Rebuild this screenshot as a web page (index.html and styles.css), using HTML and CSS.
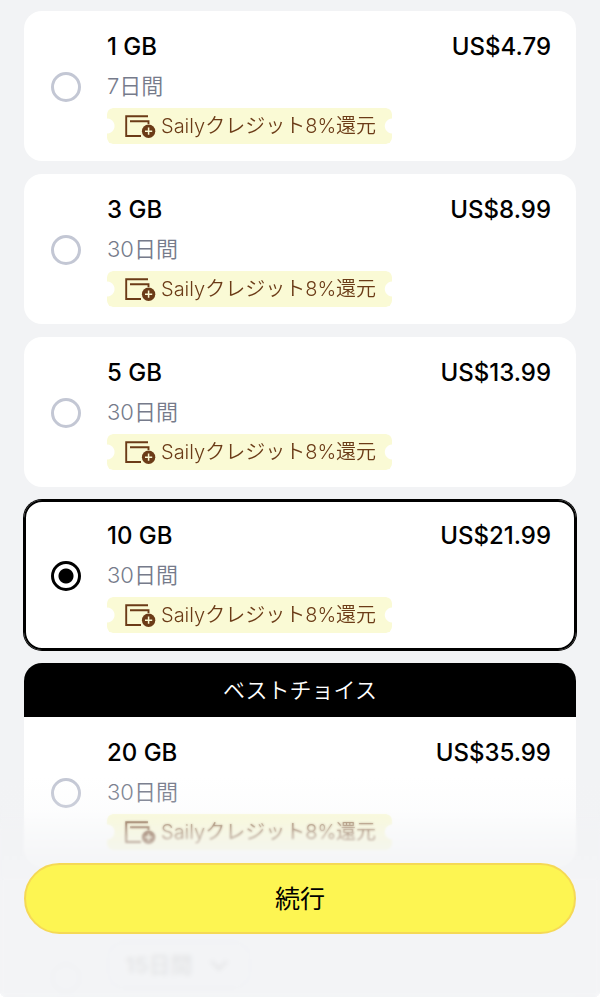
FILE: index.html
```
<!DOCTYPE html>
<html lang="ja">
<head>
  <meta charset="UTF-8" />
  <meta name="viewport" content="width=device-width, initial-scale=1.0" />
  <title>プランを選択</title>
  <link rel="stylesheet" href="styles.css">
</head>
<body>
  <svg class="sprite" aria-hidden="true">
    <symbol id="icon-credit" viewBox="0 0 31 23">
      <path d="M23 1.2H1.2V21H16" fill="none" stroke="currentColor" stroke-width="1.9"/>
      <path d="M5 6.2H23.5V9" fill="none" stroke="currentColor" stroke-width="1.9"/>
      <circle cx="23.6" cy="16.2" r="6.7" fill="currentColor"/>
      <path d="M23.6 12.6V19.8M20 16.2H27.2" stroke="#fafad5" stroke-width="1.5"/>
    </symbol>
  </svg>

  <form class="app">
    <main class="plan-list">
      <label class="plan">
        <input class="radio" type="radio" name="plan" value="1">
        <span class="details">
          <span class="title-row"><span>1 GB</span><span>US$4.79</span></span>
          <span class="days">7日間</span>
          <span class="credit"><svg class="credit-icon"><use href="#icon-credit"/></svg>Sailyクレジット8%還元</span>
        </span>
      </label>

      <label class="plan">
        <input class="radio" type="radio" name="plan" value="3">
        <span class="details">
          <span class="title-row"><span>3 GB</span><span>US$8.99</span></span>
          <span class="days">30日間</span>
          <span class="credit"><svg class="credit-icon"><use href="#icon-credit"/></svg>Sailyクレジット8%還元</span>
        </span>
      </label>

      <label class="plan">
        <input class="radio" type="radio" name="plan" value="5">
        <span class="details">
          <span class="title-row"><span>5 GB</span><span>US$13.99</span></span>
          <span class="days">30日間</span>
          <span class="credit"><svg class="credit-icon"><use href="#icon-credit"/></svg>Sailyクレジット8%還元</span>
        </span>
      </label>

      <label class="plan">
        <input class="radio" type="radio" name="plan" value="10" checked>
        <span class="details">
          <span class="title-row"><span>10 GB</span><span>US$21.99</span></span>
          <span class="days">30日間</span>
          <span class="credit"><svg class="credit-icon"><use href="#icon-credit"/></svg>Sailyクレジット8%還元</span>
        </span>
      </label>

      <section class="best">
        <h2 class="best-title">ベストチョイス</h2>
        <label class="plan">
          <input class="radio" type="radio" name="plan" value="20">
          <span class="details">
            <span class="title-row"><span>20 GB</span><span>US$35.99</span></span>
            <span class="days">30日間</span>
            <span class="credit"><svg class="credit-icon"><use href="#icon-credit"/></svg>Sailyクレジット8%還元</span>
          </span>
        </label>
      </section>

      <div class="plan plan-flex">
        <input class="radio" type="radio" name="plan" value="flex" aria-label="15日間">
        <div class="period">
          <select class="period-select" aria-label="期間">
            <option>15日間</option>
          </select>
          <svg class="chevron" viewBox="0 0 20 12"><path d="M2 2l8 8 8-8" fill="none" stroke="currentColor" stroke-width="3"/></svg>
        </div>
      </div>
    </main>

    <footer class="footer">
      <button class="continue" type="button">続行</button>
    </footer>
  </form>
</body>
</html>
```

FILE: styles.css
```
:root {
  --bg: #f2f3f5;
  --grey: #767b8b;
  --ring: #c3c7d4;
  --brown: #6b3b17;
  --yellow: #fdf552;
}

* {
  box-sizing: border-box;
}

body {
  margin: 0;
  background: #fff;
  color: #000;
  font-family: Inter, "Noto Sans CJK JP", sans-serif;
}

.sprite {
  position: absolute;
  width: 0;
  height: 0;
}

.app {
  position: relative;
  height: 100vh;
  overflow: hidden;
  background: var(--bg);
  border-radius: 0 0 6px 6px;
}

.plan-list {
  display: flex;
  flex-direction: column;
  gap: 13px;
  height: 100%;
  padding: 11px 24px 0;
  overflow-y: auto;
  scrollbar-width: none;
}

.plan {
  display: flex;
  flex-shrink: 0;
  align-items: center;
  gap: 26px;
  padding: 18px 25px 17px 27px;
  background: #fff;
  border-radius: 18px;
  cursor: pointer;
}

.plan:has(.radio:checked) {
  box-shadow: 0 0 0 1px #000, inset 0 0 0 2px #000;
}

.radio {
  appearance: none;
  flex-shrink: 0;
  width: 30px;
  height: 30px;
  margin: 0;
  border: 3px solid var(--ring);
  border-radius: 50%;
  background: #fff;
}

.radio:checked {
  border-color: #000;
  background: radial-gradient(circle, #000 7px, #fff 8px);
}

.details {
  display: flex;
  flex: 1;
  flex-direction: column;
  align-items: flex-start;
  gap: 4px;
}

.title-row {
  display: flex;
  justify-content: space-between;
  width: 100%;
  font-size: 24px;
  font-weight: 500;
  line-height: 36px;
}

.days {
  color: var(--grey);
  font-size: 22px;
  font-weight: 350;
  line-height: 35px;
}

/* ticket shape, one notch on each side */
.credit {
  display: flex;
  align-items: center;
  gap: 5px;
  height: 36px;
  padding: 0 16px 0 18px;
  border-radius: 6px;
  background: #fafad5;
  color: var(--brown);
  font-size: 20px;
  font-weight: 350;
  line-height: 36px;
  white-space: nowrap;
  mask:
    radial-gradient(circle at 0 50%, transparent 7px, #000 8px) left / 51% 100% no-repeat,
    radial-gradient(circle at 100% 50%, transparent 7px, #000 8px) right / 51% 100% no-repeat;
}

.credit-icon {
  width: 31px;
  height: 23px;
}

.best {
  flex-shrink: 0;
  border-radius: 18px;
  overflow: hidden;
}

.best-title {
  margin: 0;
  background: #000;
  color: #fff;
  font-size: 22px;
  font-weight: 350;
  line-height: 54px;
  text-align: center;
}

.best .plan {
  border-radius: 0 0 18px 18px;
}

.plan-flex {
  min-height: 194px;
}

.period {
  display: flex;
  align-items: center;
  gap: 16px;
  height: 48px;
  margin-bottom: 26px;
  padding: 0 20px 0 16px;
  border: 2px solid var(--ring);
  border-radius: 18px;
}

.period-select {
  appearance: none;
  border: 0;
  padding: 0;
  background: none;
  color: #000;
  font-family: inherit;
  font-size: 22px;
  font-weight: 700;
}

.chevron {
  width: 20px;
  height: 12px;
}

.footer {
  position: absolute;
  z-index: 1;
  right: 0;
  bottom: 0;
  left: 0;
  padding: 87px 24px 63px;
  background: linear-gradient(#f3f4f600, #f3f4f633 36px, #f3f4f680 56px, #f3f4f6cc 82px, #f3f4f6f0 120px, #f3f4f6f0);
}

/* content softens as it slides under the button */
.footer::before,
.footer::after {
  content: "";
  position: absolute;
  inset: 30px 0 0;
  z-index: -1;
  backdrop-filter: blur(1px);
  mask: linear-gradient(transparent, #000 30px);
}

.footer::after {
  inset: 100px 0 0;
  backdrop-filter: blur(2px);
  mask: none;
}

.continue {
  display: block;
  position: relative;
  width: 100%;
  height: 71px;
  border: 2px solid #f5d955;
  border-radius: 36px;
  background: var(--yellow);
  color: #000;
  font-family: inherit;
  font-size: 25px;
  font-weight: 400;
  line-height: 64px;
  cursor: pointer;
}
```
